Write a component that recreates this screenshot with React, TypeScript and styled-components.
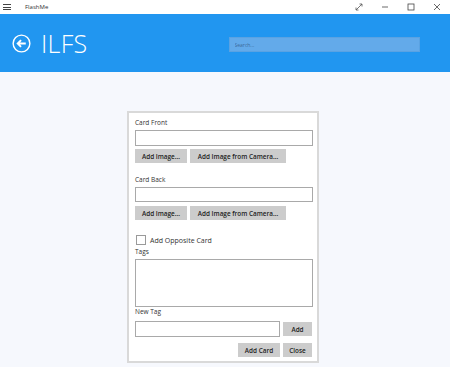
import React from 'react'
import styled, { createGlobalStyle } from 'styled-components'

const GlobalStyle = createGlobalStyle`
    html, body {
        margin: 0;
        padding: 0;
        background: #f6f8fd;
        font-family: "Open Sans", "Noto Sans", sans-serif;
    }
`

const TitleBar = styled.div`
    height: 14px;
    background: #ffffff;
    display: flex;
    align-items: center;
    color: #222;
`

const Hamburger = styled.div`
    width: 8px;
    margin-left: 3px;
    display: flex;
    flex-direction: column;
    gap: 1.5px;

    span {
        display: block;
        height: 1px;
        background: #444;
    }
`

const AppName = styled.div`
    margin-left: 14px;
    font-size: 6px;
    color: #333;
`

const WindowButtons = styled.div`
    margin-left: auto;
    display: flex;
    align-items: center;
`

const WinButton = styled.div`
    width: 26px;
    height: 14px;
    display: flex;
    align-items: center;
    justify-content: center;
`

const Header = styled.header`
    height: 58px;
    background: #2196f0;
    display: flex;
    align-items: center;
    padding-left: 12px;
    box-sizing: border-box;
`

const Title = styled.h1`
    margin: 0 0 0 10px;
    font-size: 25px;
    font-weight: 300;
    color: #ffffff;
    letter-spacing: 0.3px;
    line-height: 1;
`

const Search = styled.input`
    margin-left: 141px;
    margin-top: 3px;
    width: 191px;
    height: 15px;
    box-sizing: border-box;
    background: #63aaea;
    border: 1px solid #5aa2e2;
    font-size: 5px;
    color: #335;
    padding: 0 5px;
    font-family: inherit;
    outline: none;

    &::placeholder {
        color: #3d6a9a;
    }
`

const Main = styled.main`
    display: flex;
    justify-content: center;
    padding-top: 39px;
    padding-right: 4px;
`

const Card = styled.div`
    width: 192px;
    box-sizing: border-box;
    background: #ffffff;
    border: 2px solid #d9d9d9;
    padding: 5px 4px 4px 6px;
    display: flex;
    flex-direction: column;
`

const Label = styled.div<{ $gap?: number }>`
    height: 10px;
    line-height: 10px;
    font-size: 6.5px;
    color: #333;
    margin-top: ${({ $gap }) => $gap || 0}px;
`

const TextBox = styled.div<{ $h?: number; $gap?: number }>`
    height: ${({ $h }) => $h || 16}px;
    box-sizing: border-box;
    border: 1px solid #a9a9a9;
    background: #fff;
    margin-top: ${({ $gap }) => $gap || 2}px;
    flex-shrink: 0;
`

const ButtonRow = styled.div<{ $gap?: number; $end?: boolean }>`
    display: flex;
    gap: 3px;
    margin-top: ${({ $gap }) => $gap || 3}px;
    justify-content: ${({ $end }) => ($end ? 'flex-end' : 'flex-start')};
    padding-right: ${({ $end }) => ($end ? 1 : 0)}px;
`

const Button = styled.div<{ $w: number }>`
    width: ${({ $w }) => $w}px;
    height: 14px;
    background: #cccccc;
    font-size: 6.4px;
    font-weight: 600;
    color: #222;
    display: flex;
    align-items: center;
    justify-content: center;
    white-space: nowrap;
    flex-shrink: 0;
`

const CheckRow = styled.div`
    display: flex;
    align-items: center;
    margin-top: 15px;
    height: 10px;
    padding-left: 1px;
    font-size: 7px;
    color: #333;
`

const Box = styled.span`
    width: 10px;
    height: 10px;
    box-sizing: border-box;
    border: 1px solid #9a9a9a;
    margin-right: 4px;
`

const InputRow = styled.div`
    display: flex;
    align-items: center;
    margin-top: 4px;
    gap: 3px;
    padding-right: 1px;

    ${TextBox} {
        margin-top: 0;
        flex: 1;
    }
`

export default function App() {
    return (
        <>
            <GlobalStyle />
            <TitleBar>
                <Hamburger><span /><span /><span /></Hamburger>
                <AppName>FlashMe</AppName>
                <WindowButtons>
                    <WinButton>
                        <svg width="8" height="8" viewBox="0 0 8 8" fill="none" stroke="#555" strokeWidth="0.8">
                            <path d="M1 7 L7 1 M4.5 1 H7 V3.5 M1 4.5 V7 H3.5" />
                        </svg>
                    </WinButton>
                    <WinButton>
                        <svg width="8" height="8" viewBox="0 0 8 8" stroke="#444" strokeWidth="0.8">
                            <path d="M1 4 H7" />
                        </svg>
                    </WinButton>
                    <WinButton>
                        <svg width="8" height="8" viewBox="0 0 8 8" fill="none" stroke="#444" strokeWidth="0.8">
                            <rect x="1" y="1" width="6" height="6" />
                        </svg>
                    </WinButton>
                    <WinButton>
                        <svg width="8" height="8" viewBox="0 0 8 8" stroke="#444" strokeWidth="0.8">
                            <path d="M1 1 L7 7 M7 1 L1 7" />
                        </svg>
                    </WinButton>
                </WindowButtons>
            </TitleBar>
            <Header>
                <svg width="19" height="19" viewBox="0 0 20 20" fill="none" stroke="#fff" strokeWidth="1.5">
                    <circle cx="10" cy="10" r="8.8" />
                    <path d="M14.5 10 H6 M9.5 6.5 L6 10 L9.5 13.5" strokeWidth="2" />
                </svg>
                <Title>ILFS</Title>
                <Search placeholder="Search..." />
            </Header>
            <Main>
                <Card>
                    <Label>Card Front</Label>
                    <TextBox />
                    <ButtonRow>
                        <Button $w={52}>Add Image...</Button>
                        <Button $w={96}>Add Image from Camera...</Button>
                    </ButtonRow>
                    <Label $gap={12}>Card Back</Label>
                    <TextBox $h={15} />
                    <ButtonRow $gap={4}>
                        <Button $w={52}>Add Image...</Button>
                        <Button $w={96}>Add Image from Camera...</Button>
                    </ButtonRow>
                    <CheckRow>
                        <Box />
                        Add Opposite Card
                    </CheckRow>
                    <Label $gap={2}>Tags</Label>
                    <TextBox $h={48} />
                    <Label>New Tag</Label>
                    <InputRow>
                        <TextBox $h={16} />
                        <Button $w={29}>Add</Button>
                    </InputRow>
                    <ButtonRow $gap={6} $end>
                        <Button $w={42}>Add Card</Button>
                        <Button $w={29}>Close</Button>
                    </ButtonRow>
                </Card>
            </Main>
        </>
    )
}
